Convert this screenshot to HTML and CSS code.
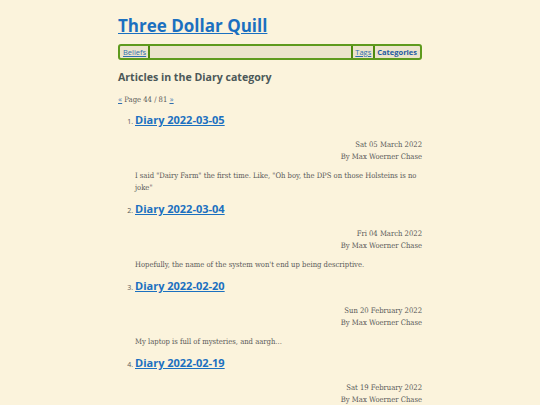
FILE: index.html
```html
<!DOCTYPE html>
<html>
<head>
<meta charset="utf-8">
<link rel="stylesheet" href="styles.css">
</head>
<body>
<div class="page">
  <header class="site-header">
    <h1 class="site-title"><a href="#">Three Dollar Quill</a></h1>
    <nav class="nav">
      <a class="nav-item" href="#">Beliefs</a>
      <span class="nav-spacer"></span>
      <a class="nav-item nav-left" href="#">Tags</a>
      <a class="nav-item nav-left active" href="#">Categories</a>
    </nav>
  </header>
  <main>
    <h2 class="section-title">Articles in the Diary category</h2>
    <p class="pager"><a href="#">«</a> Page 44 / 81 <a href="#">»</a></p>
    <ol class="articles">
      <li class="article">
        <h3 class="article-title"><a href="#">Diary 2022-03-05</a></h3>
        <div class="meta">
          <div>Sat 05 March 2022</div>
          <div>By Max Woerner Chase</div>
        </div>
        <p class="summary">I said "Dairy Farm" the first time. Like, "Oh boy, the DPS on those Holsteins is no joke"</p>
      </li>
      <li class="article">
        <h3 class="article-title"><a href="#">Diary 2022-03-04</a></h3>
        <div class="meta">
          <div>Fri 04 March 2022</div>
          <div>By Max Woerner Chase</div>
        </div>
        <p class="summary">Hopefully, the name of the system won't end up being descriptive.</p>
      </li>
      <li class="article">
        <h3 class="article-title"><a href="#">Diary 2022-02-20</a></h3>
        <div class="meta">
          <div>Sun 20 February 2022</div>
          <div>By Max Woerner Chase</div>
        </div>
        <p class="summary">My laptop is full of mysteries, and aargh...</p>
      </li>
      <li class="article">
        <h3 class="article-title"><a href="#">Diary 2022-02-19</a></h3>
        <div class="meta">
          <div>Sat 19 February 2022</div>
          <div>By Max Woerner Chase</div>
        </div>
        <p class="summary">Placeholder.</p>
      </li>
    </ol>
  </main>
</div>
</body>
</html>
```
FILE: styles.css
```css
html, body {
  margin: 0;
  padding: 0;
  background: #fbf3dc;
}
body {
  font-family: "DejaVu Serif Condensed", "DejaVu Serif", serif;
  font-stretch: condensed;
  color: #595959;
  font-size: 7.6px;
}
.page {
  width: 304px;
  margin: 0 auto;
  padding-top: 14px;
}
.site-title {
  margin: 0;
  font-family: "Open Sans", sans-serif;
  font-stretch: normal;
  font-size: 17px;
  font-weight: 700;
  line-height: 24px;
}
.site-title a, .article-title a {
  color: #1b70c0;
}
.nav {
  display: flex;
  margin-top: 6px;
  border: 2px solid #5e9a1e;
  border-radius: 3px;
  background: #ece4cc;
  height: 12px;
  align-items: stretch;
  font-family: "Open Sans", sans-serif;
  font-stretch: normal;
  font-size: 7.5px;
  line-height: 12px;
  padding: 0 1px;
}
.nav-item {
  color: #2f6fb0;
  padding: 0 2px;
  border-right: 2px solid #4e8a10;
}
.nav-left {
  border-right: none;
  border-left: 2px solid #4e8a10;
}
.nav-spacer { flex: 1; }
.active {
  font-weight: 700;
  text-decoration: none;
  color: #1f5aa0;
}
.section-title {
  margin: 8px 0 0;
  font-family: "Open Sans", sans-serif;
  font-stretch: normal;
  font-size: 10.6px;
  font-weight: 700;
  color: #4c5858;
  line-height: 18px;
}
.pager {
  margin: 8px 0 0;
  line-height: 12px;
}
.pager a { color: #2f6fb0; }
.articles {
  margin: 5px 0 0;
  padding-left: 17px;
}
.article::marker {
  font-family: "Open Sans", sans-serif;
  font-stretch: normal;
  font-size: 7px;
}
.article-title {
  margin: 0;
  font-family: "Open Sans", sans-serif;
  font-stretch: normal;
  font-size: 11px;
  font-weight: 700;
  line-height: 18px;
}
.meta {
  text-align: right;
  line-height: 12px;
  margin-top: 10px;
}
.summary {
  margin: 7px 0 0;
  line-height: 12px;
  padding-bottom: 6px;
}
```
